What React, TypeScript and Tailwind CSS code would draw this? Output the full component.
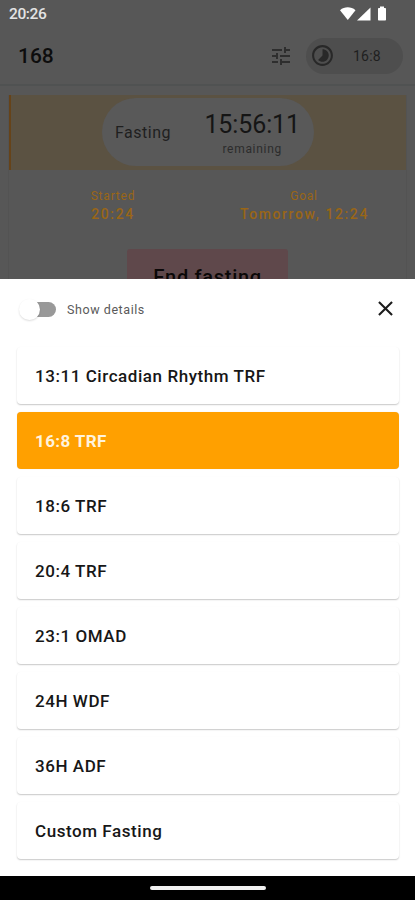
import clsx from "clsx";

const plans = [
  "13:11 Circadian Rhythm TRF",
  "16:8 TRF",
  "18:6 TRF",
  "20:4 TRF",
  "23:1 OMAD",
  "24H WDF",
  "36H ADF",
  "Custom Fasting",
];

const selectedPlan = "16:8 TRF";

function StatusBar() {
  return (
    <div className="flex h-7 items-center justify-between pl-[9px] pr-[27px] text-white">
      <span className="text-[15.5px] font-medium leading-7 tracking-[-0.4px] text-[#e4e4e4]">20:26</span>
      <svg width="48" height="16" viewBox="0 0 48 16" fill="currentColor" className="mt-[-1px]">
        <path d="M0 4.200C4.500 0.400 11 0.400 15.500 4.200L7.800 14Z" />
        <path d="M30.500 1.500V14.500H17Z" />
        <path d="M40 0.500h4v1.500h1.200q.8 0 .8.8v10.900q0 .8-.8.8h-6.400q-.8 0-.8-.8V2.800q0-.8.8-.8H40Z" />
      </svg>
    </div>
  );
}

function AppBar() {
  return (
    <header className="flex h-[58px] items-center border-b-2 border-[#505252] pl-[18px] pr-[12px]">
      <h1 className="mt-[2px] flex-1 text-[21px] font-medium text-[#0d0d0d]">168</h1>
      <svg width="24" height="24" viewBox="0 0 24 24" fill="#2e2e2e" className="mr-[13px]">
        <path d="M3 17v2h6v-2H3zM3 5v2h10V5H3zm10 16v-2h8v-2h-8v-2h-2v6h2zM7 9v2H3v2h4v2h2V9H7zm14 4v-2H11v2h10zm-6-4h2V7h4V5h-4V3h-2v6z" />
      </svg>
      <div className="flex h-9 w-[97px] items-center rounded-full bg-[#4e4e4e] pl-[4px]">
        <svg width="25" height="25" viewBox="0 0 24 24" fill="#282828" className="mt-[-1px]">
          <path d="M16.240 7.760C15.070 6.590 13.540 6 12 6v6l-4.240 4.240c2.340 2.340 6.140 2.340 8.490 0 2.340-2.340 2.340-6.140-.01-8.480zM12 2C6.480 2 2 6.480 2 12s4.480 10 10 10 10-4.480 10-10S17.520 2 12 2zm0 18c-4.420 0-8-3.580-8-8s3.580-8 8-8 8 3.580 8 8-3.580 8-8 8z" />
        </svg>
        <span className="ml-[18px] text-[14px] tracking-[0.2px] text-[#1f1f1f]">16:8</span>
      </div>
    </header>
  );
}

function FastingCard() {
  return (
    <section className="mx-[8px] mt-[9px] h-[240px] border-x border-[#535353]">
      <div className="flex h-[75px] items-start border-l-2 border-[#664319] bg-[#5b5242] pl-[91px] pt-[3px]">
        <div className="flex h-[68px] w-[212px] items-center justify-between rounded-full bg-[#595959] pl-[13px] pr-[14px]">
          <span className="mt-[2px] text-[16px] tracking-[0.5px] text-[#1f1f1f]">Fasting</span>
          <div className="flex flex-col items-center pt-[4px]">
            <span className="text-[25px] leading-[28px] tracking-[-0.1px] text-[#151515]">15:56:11</span>
            <span className="mt-[2px] text-[12px] leading-[16px] tracking-[0.7px] text-[#2c2c2c]">remaining</span>
          </div>
        </div>
      </div>
      <div className="flex pt-[18px] text-center text-[#9a6616]">
        <div className="w-[208px]">
          <p className="text-[12px] leading-[16px] tracking-[0.8px]">Started</p>
          <p className="text-[14px] font-medium leading-[20px] tracking-[1.600px]">20:24</p>
        </div>
        <div className="w-[176px]">
          <p className="pr-[2px] text-[12px] leading-[16px] tracking-[0.7px]">Goal</p>
          <p className="whitespace-nowrap pr-[1px] text-[14px] font-medium leading-[20px] tracking-[1.600px]">Tomorrow, 12:24</p>
        </div>
      </div>
      <button className="ml-[118px] mt-[25px] block h-[56px] w-[161px] rounded-[3px] bg-[#5f484b] text-[20px] font-medium tracking-[0.7px] text-[#0b0808]">
        End fasting
      </button>
    </section>
  );
}

function PlanRow({ name, selected }: { name: string; selected: boolean }) {
  return (
    <li
      className={clsx(
        "flex h-[57px] items-center rounded-[4px] pl-[18px] pt-[2px] text-[17px]",
        selected
          ? "bg-[#ffa000] font-bold tracking-[0.4px] text-[#fff3dd] shadow-[0_0_1px_#d9d9d9]"
          : "bg-white font-medium tracking-[0.56px] text-[#171717] shadow-[0_1px_1.500px_rgba(0,0,0,0.22)]"
      )}
    >
      {name}
    </li>
  );
}

export default function App() {
  return (
    <div className="flex h-[900px] w-[415px] flex-col bg-white font-['Roboto',sans-serif]">
      <div className="h-[279px] overflow-hidden bg-[#575757]">
        <StatusBar />
        <AppBar />
        <FastingCard />
      </div>

      <main className="h-[597px] bg-white pl-[17px] pr-[16px]">
        <div className="flex h-[60px] items-center">
          <div className="flex h-[22px] w-[38px] items-center">
            <span className="z-10 ml-[2px] h-[21px] w-[21px] shrink-0 rounded-full bg-white shadow-[0_1px_2px_rgba(0,0,0,0.14)]" />
            <span className="ml-[-14px] h-[15px] w-[30px] shrink-0 rounded-full bg-[#999999]" />
          </div>
          <span className="ml-[12px] mt-[2px] flex-1 text-[12.500px] tracking-[0.570px] text-[#5a5a5a]">Show details</span>
          <svg width="25" height="25" viewBox="0 0 24 24" fill="#1c1c1c" className="mr-[1px] mt-[-1px]">
            <path d="M19 6.410L17.590 5 12 10.590 6.410 5 5 6.410 10.590 12 5 17.590 6.410 19 12 13.410 17.590 19 19 17.590 13.410 12z" />
          </svg>
        </div>
        <ul className="mt-[8px] flex flex-col gap-2">
          {plans.map((name) => (
            <PlanRow key={name} name={name} selected={name === selectedPlan} />
          ))}
        </ul>
      </main>

      <nav className="flex h-6 items-center justify-center bg-black">
        <span className="h-1 w-[116px] rounded-full bg-[#f1f1f1]" />
      </nav>
    </div>
  );
}
